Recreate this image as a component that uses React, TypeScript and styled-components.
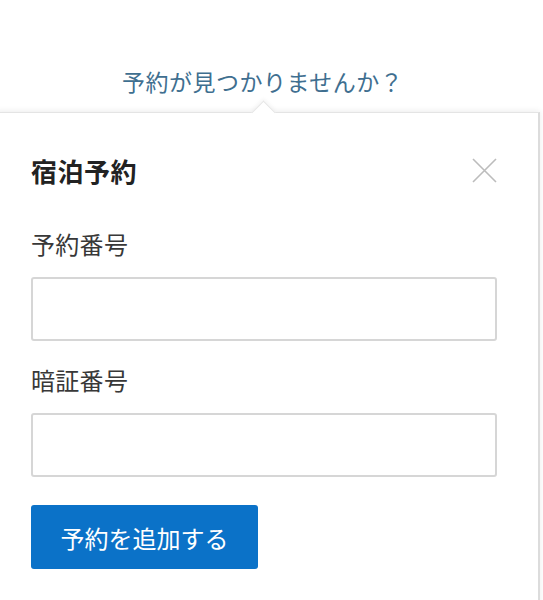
import React from "react";
import styled, { createGlobalStyle } from "styled-components";

const GlobalStyle = createGlobalStyle`
  html, body {
    margin: 0;
    padding: 0;
    background: #fff;
    overflow: hidden;
  }
  body {
    font-family: "Noto Sans CJK JP", "Noto Sans", sans-serif;
  }
`;

const Page = styled.div`
  width: 543px;
  height: 600px;
  overflow: hidden;
  background: #fff;
`;

const LinkRow = styled.div`
  padding: 64px 0 0 122px;
  margin-bottom: 14px;
`;

const HelpLink = styled.a`
  display: inline-block;
  font-size: 23px;
  line-height: 34px;
  letter-spacing: 0.5px;
  color: #3f6f90;
  text-decoration: none;
  cursor: pointer;
`;

const Panel = styled.div`
  position: relative;
  margin-left: -4px;
  width: 544px;
  box-sizing: border-box;
  min-height: 520px;
  padding: 41px 41px 0 34px;
  background: #fff;
  border: 1px solid #e4e4e4;
  border-right: 2px solid #dcdcdc;
  box-shadow: 0 -1px 6px rgba(0, 0, 0, 0.08);

  &::before {
    content: "";
    position: absolute;
    top: -9px;
    left: 258px;
    width: 16px;
    height: 16px;
    background: #fff;
    border-top: 1px solid #e6e6e6;
    border-left: 1px solid #e6e6e6;
    transform: rotate(45deg);
    box-shadow: -2px -2px 4px rgba(0, 0, 0, 0.04);
  }
`;

const Header = styled.div`
  display: flex;
  justify-content: space-between;
  align-items: flex-start;
  margin-bottom: 39px;
`;

const Title = styled.h2`
  margin: 0;
  font-size: 26px;
  line-height: 34px;
  font-weight: 700;
  letter-spacing: 0.5px;
  color: #222;
`;

const CloseButton = styled.button`
  margin-top: 4px;
  width: 25px;
  height: 25px;
  padding: 0;
  border: none;
  background: none;
  cursor: pointer;
  display: flex;
`;

const Label = styled.label<{ $gap?: number }>`
  display: block;
  margin-top: ${(p) => p.$gap ?? 0}px;
  margin-bottom: 16px;
  font-size: 24px;
  line-height: 34px;
  letter-spacing: 0.3px;
  color: #383838;
`;

const Input = styled.input`
  display: block;
  width: 100%;
  height: 64px;
  box-sizing: border-box;
  border: 2px solid #d6d6d6;
  border-radius: 3px;
  background: #fff;
  font-size: 20px;
  padding: 0 14px;
  outline: none;
`;

const SubmitButton = styled.button`
  margin-top: 28px;
  width: 227px;
  height: 64px;
  border: none;
  border-radius: 3px;
  background: #0b72c8;
  color: #fff;
  font-family: "Noto Sans CJK JP", sans-serif;
  font-size: 24px;
  cursor: pointer;
`;

const CloseIcon = () => (
  <svg width="25" height="25" viewBox="0 0 25 25" fill="none">
    <path d="M1 1L24 24M24 1L1 24" stroke="#bcbcbc" strokeWidth="1.6" />
  </svg>
);

export default function App() {
  return (
    <Page>
      <GlobalStyle />
      <LinkRow>
        <HelpLink>予約が見つかりませんか？</HelpLink>
      </LinkRow>
      <Panel>
        <Header>
          <Title>宿泊予約</Title>
          <CloseButton aria-label="閉じる">
            <CloseIcon />
          </CloseButton>
        </Header>
        <Label htmlFor="reservation-number">予約番号</Label>
        <Input id="reservation-number" type="text" />
        <Label htmlFor="pin" $gap={22}>
          暗証番号
        </Label>
        <Input id="pin" type="password" />
        <SubmitButton>予約を追加する</SubmitButton>
      </Panel>
    </Page>
  );
}
